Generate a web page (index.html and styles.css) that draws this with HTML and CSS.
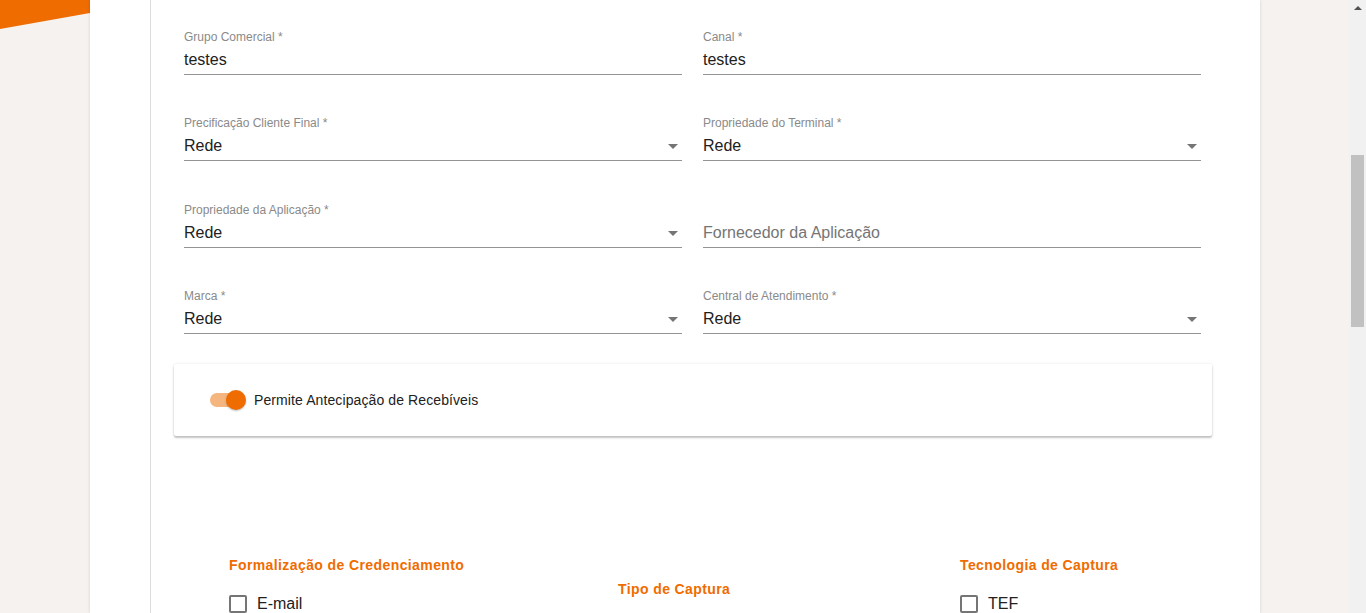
FILE: index.html
```html
<!DOCTYPE html>
<html lang="pt-BR">
<head>
<meta charset="utf-8">
<title>Formulário</title>
<link rel="stylesheet" href="styles.css">
</head>
<body>
<div class="side-left">
  <svg class="brand-stripe" width="90" height="30" viewBox="0 0 90 30"><polygon points="0,0 90,0 90,13 0,29" fill="#ef6c00"/></svg>
</div>
<main class="panel">
  <div class="rail"></div>
  <div class="content">
    <div class="fields">
      <div class="field">
        <label class="field-label">Grupo Comercial *</label>
        <div class="field-value">testes</div>
      </div>
      <div class="field">
        <label class="field-label">Canal *</label>
        <div class="field-value">testes</div>
      </div>
      <div class="field">
        <label class="field-label">Precificação Cliente Final *</label>
        <div class="field-value select">Rede<span class="caret"></span></div>
      </div>
      <div class="field">
        <label class="field-label">Propriedade do Terminal *</label>
        <div class="field-value select">Rede<span class="caret"></span></div>
      </div>
      <div class="field">
        <label class="field-label">Propriedade da Aplicação *</label>
        <div class="field-value select">Rede<span class="caret"></span></div>
      </div>
      <div class="field">
        <label class="field-label empty">&nbsp;</label>
        <div class="field-value placeholder">Fornecedor da Aplicação</div>
      </div>
      <div class="field">
        <label class="field-label">Marca *</label>
        <div class="field-value select">Rede<span class="caret"></span></div>
      </div>
      <div class="field">
        <label class="field-label">Central de Atendimento *</label>
        <div class="field-value select">Rede<span class="caret"></span></div>
      </div>
    </div>

    <div class="card">
      <span class="toggle"><span class="toggle-track"></span><span class="toggle-thumb"></span></span>
      <span class="toggle-text">Permite Antecipação de Recebíveis</span>
    </div>

    <div class="groups">
      <div class="group">
        <h3 class="group-title">Formalização de Credenciamento</h3>
        <div class="check"><span class="box"></span><span>E-mail</span></div>
      </div>
      <div class="group middle">
        <h3 class="group-title">Tipo de Captura</h3>
      </div>
      <div class="group">
        <h3 class="group-title">Tecnologia de Captura</h3>
        <div class="check"><span class="box"></span><span>TEF</span></div>
      </div>
    </div>
  </div>
</main>
<div class="side-right"></div>
<div class="scrollbar">
  <span class="scroll-arrow"></span>
  <span class="scroll-thumb"></span>
</div>
</body>
</html>
```

FILE: styles.css
```css
html, body {
  margin: 0;
  padding: 0;
}
body {
  height: 613px;
  overflow: hidden;
  display: flex;
  background: #f5f2ef;
  font-family: "Liberation Sans", Arial, sans-serif;
  color: #212121;
}
.side-left {
  width: 90px;
  flex: none;
}
.brand-stripe {
  display: block;
}
.panel {
  width: 1170px;
  flex: none;
  background: #fff;
  display: flex;
  box-shadow: 0 0 3px rgba(0, 0, 0, 0.14);
  position: relative;
}
.rail {
  width: 61px;
  box-sizing: border-box;
  border-right: 1px solid #dcdcdc;
  flex: none;
}
.content {
  flex: 1;
  padding: 30px 48px 0 23px;
}
.fields {
  padding: 0 11px 0 10px;
  display: grid;
  grid-template-columns: 498px 498px;
  column-gap: 21px;
  row-gap: 41.4px;
}
.field {
  display: flex;
  flex-direction: column;
}
.field-label {
  font-size: 12px;
  line-height: 14px;
  height: 14px;
  color: #8a8a8a;
}
.field-value {
  margin-top: 6px;
  font-size: 16px;
  line-height: 20px;
  padding-bottom: 4px;
  border-bottom: 1px solid #949494;
  display: flex;
  align-items: center;
  justify-content: space-between;
}
.field-value.placeholder {
  color: #757575;
}
.caret {
  width: 0;
  height: 0;
  border-left: 5px solid transparent;
  border-right: 5px solid transparent;
  border-top: 5px solid #757575;
  margin-right: 4px;
  margin-top: 1px;
}
.card {
  margin-top: 30px;
  height: 72px;
  box-sizing: border-box;
  background: #fff;
  border-radius: 2px;
  box-shadow: 0 2px 2px rgba(0, 0, 0, 0.22), 0 0 3px rgba(0, 0, 0, 0.1);
  display: flex;
  align-items: center;
  padding-left: 36px;
}
.toggle {
  position: relative;
  width: 36px;
  height: 20px;
  margin-right: 8px;
  flex: none;
}
.toggle-track {
  position: absolute;
  left: 0;
  top: 3px;
  width: 34px;
  height: 14px;
  border-radius: 7px;
  background: #f5b57f;
}
.toggle-thumb {
  position: absolute;
  left: 16px;
  top: 0;
  width: 20px;
  height: 20px;
  border-radius: 50%;
  background: #ef6c00;
  box-shadow: 0 1px 2px rgba(0, 0, 0, 0.25);
}
.toggle-text {
  font-size: 14px;
  line-height: 20px;
  letter-spacing: 0.1px;
  color: #212121;
}
.groups {
  margin-top: 121px;
  padding-left: 55px;
  display: grid;
  grid-template-columns: 389px 342px 1fr;
}
.group-title {
  margin: 0;
  font-size: 14px;
  line-height: 16px;
  font-weight: bold;
  letter-spacing: 0.4px;
  color: #ef6c00;
}
.group.middle {
  padding-top: 24px;
}
.check {
  margin-top: 21px;
  display: flex;
  align-items: center;
  font-size: 16px;
  line-height: 20px;
}
.box {
  width: 18px;
  height: 18px;
  box-sizing: border-box;
  border: 2px solid #757575;
  border-radius: 2px;
  margin-right: 10px;
}
.side-right {
  flex: 1;
}
.scrollbar {
  width: 17px;
  flex: none;
  background: #f1f1f1;
  display: flex;
  flex-direction: column;
  align-items: center;
}
.scroll-arrow {
  margin-top: 6px;
  width: 0;
  height: 0;
  border-left: 4px solid transparent;
  border-right: 4px solid transparent;
  border-bottom: 4px solid #505050;
}
.scroll-thumb {
  margin-top: 145px;
  width: 13px;
  height: 172px;
  background: #c1c1c1;
}
```
